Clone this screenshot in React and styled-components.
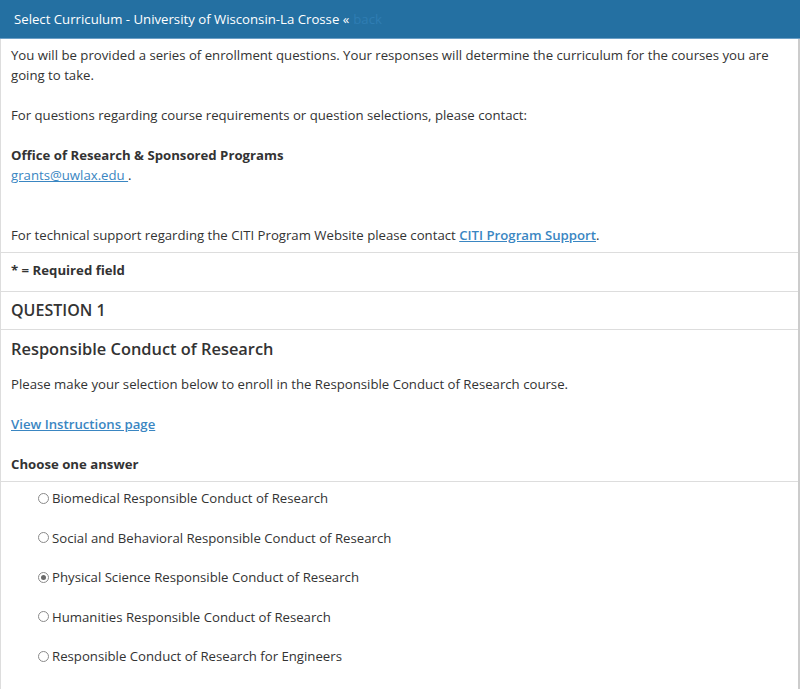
import React, { useState } from 'react';
import styled, { createGlobalStyle } from 'styled-components';

const GlobalStyle = createGlobalStyle`
  html, body {
    margin: 0;
    padding: 0;
    background: #fff;
  }
  body {
    font-family: "Open Sans", "Noto Sans", sans-serif;
    font-size: 13.2px;
    line-height: 20px;
    color: #333;
  }
`;

const Panel = styled.div`
  width: 800px;
  box-sizing: border-box;
  border-left: 1px solid #ddd;
  border-right: 2px solid #ccc;
  min-height: 689px;
`;

const Header = styled.div`
  height: 39px;
  box-sizing: border-box;
  display: flex;
  align-items: center;
  padding: 0 14px;
  margin-left: -1px;
  margin-right: -2px;
  background: #2470a2;
  border-bottom: 1px solid #6b9fc6;
  color: #fff;
  font-size: 13.2px;
`;

const BackLink = styled.a`
  color: #2f7db3;
  text-decoration: none;
  margin-left: 4px;
`;

const Section = styled.div`
  padding: ${(p) => p.pad || '0 10px'};
  border-bottom: 1px solid #ddd;
`;

const Para = styled.p`
  margin: 0 0 ${(p) => p.gap || '20px'};
`;

const Link = styled.a`
  color: #3a86c2;
  text-decoration: underline;
  font-weight: ${(p) => (p.strong ? 600 : 400)};
`;

const Strong = styled.div`
  font-weight: 700;
`;

const QuestionTitle = styled.div`
  font-size: 16px;
  font-weight: 600;
  line-height: 20px;
`;

const Heading = styled.h3`
  margin: 0 0 15px;
  font-size: 16.4px;
  font-weight: 600;
  line-height: 20px;
`;

const Options = styled.div`
  display: flex;
  flex-direction: column;
  gap: 19.5px;
  padding: 6px 0 20px 37px;
`;

const OptionRow = styled.label`
  display: flex;
  align-items: center;
  line-height: 20px;
  cursor: pointer;
`;

const Radio = styled.input`
  appearance: none;
  width: 11px;
  height: 11px;
  margin: 0 3px 0 0;
  border: 1px solid #8a8a8a;
  border-radius: 50%;
  background: #fff;
  box-sizing: border-box;
  display: grid;
  place-items: center;
  &:checked::after {
    content: '';
    width: 5px;
    height: 5px;
    border-radius: 50%;
    background: #6a6a6a;
  }
`;

const answers = [
  'Biomedical Responsible Conduct of Research',
  'Social and Behavioral Responsible Conduct of Research',
  'Physical Science Responsible Conduct of Research',
  'Humanities Responsible Conduct of Research',
  'Responsible Conduct of Research for Engineers',
];

export default function App() {
  const [choice, setChoice] = useState(2);

  return (
    <>
      <GlobalStyle />
      <Panel>
        <Header>
          Select Curriculum - University of Wisconsin-La Crosse «
          <BackLink href="#">back</BackLink>
        </Header>
        <Section pad="6px 10px 7px">
          <Para>
            You will be provided a series of enrollment questions. Your responses will
            determine the curriculum for the courses you are going to take.
          </Para>
          <Para>
            For questions regarding course requirements or question selections, please contact:
          </Para>
          <Para>
            <Strong>Office of Research &amp; Sponsored Programs</Strong>
            <Link href="#">grants@uwlax.edu </Link>
            .
            <br />
            <br />
          </Para>
          <Para gap="0">
            For technical support regarding the CITI Program Website please contact
            {' '}
            <Link href="#" strong>CITI Program Support</Link>
            .
          </Para>
        </Section>
        <Section pad="7px 10px 11px">
          <Strong>* = Required field</Strong>
        </Section>
        <Section pad="8px 10px 9px">
          <QuestionTitle>QUESTION 1</QuestionTitle>
        </Section>
        <Section pad="9px 10px 7px">
          <Heading>Responsible Conduct of Research</Heading>
          <Para>
            Please make your selection below to enroll in the Responsible Conduct of Research course.
          </Para>
          <Para>
            <Link href="#" strong>View Instructions page</Link>
          </Para>
          <Strong>Choose one answer</Strong>
        </Section>
        <Options>
          {answers.map((a, i) => (
            <OptionRow key={a}>
              <Radio
                type="radio"
                name="q1"
                checked={choice === i}
                onChange={() => setChoice(i)}
              />
              {a}
            </OptionRow>
          ))}
        </Options>
      </Panel>
    </>
  );
}
